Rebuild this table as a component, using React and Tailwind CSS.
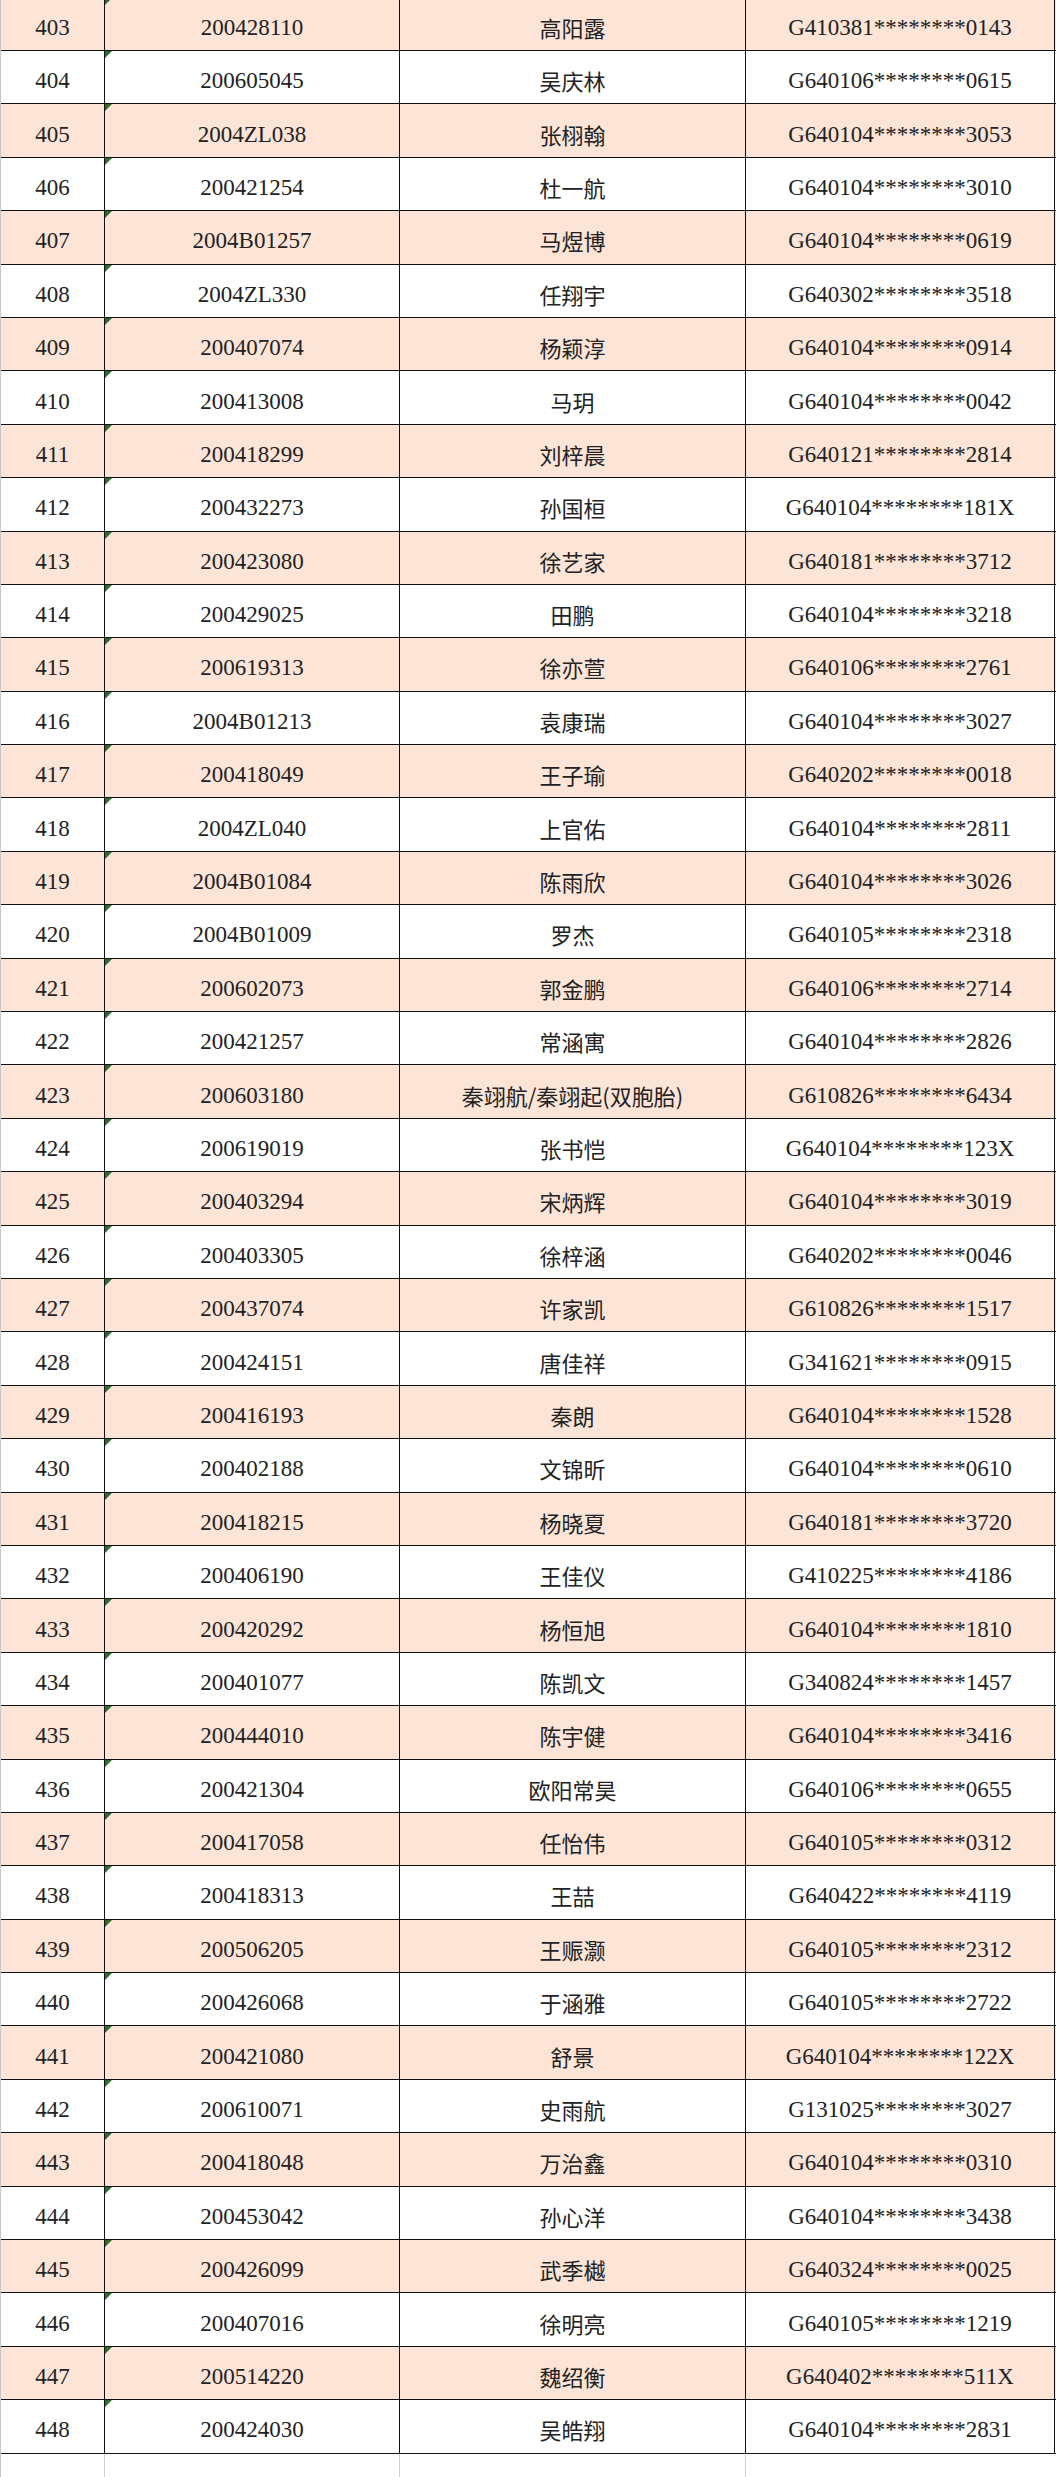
const rows = [
  ["403", "200428110", "高阳露", "G410381********0143"],
  ["404", "200605045", "吴庆林", "G640106********0615"],
  ["405", "2004ZL038", "张栩翰", "G640104********3053"],
  ["406", "200421254", "杜一航", "G640104********3010"],
  ["407", "2004B01257", "马煜博", "G640104********0619"],
  ["408", "2004ZL330", "任翔宇", "G640302********3518"],
  ["409", "200407074", "杨颖淳", "G640104********0914"],
  ["410", "200413008", "马玥", "G640104********0042"],
  ["411", "200418299", "刘梓晨", "G640121********2814"],
  ["412", "200432273", "孙国桓", "G640104********181X"],
  ["413", "200423080", "徐艺家", "G640181********3712"],
  ["414", "200429025", "田鹏", "G640104********3218"],
  ["415", "200619313", "徐亦萱", "G640106********2761"],
  ["416", "2004B01213", "袁康瑞", "G640104********3027"],
  ["417", "200418049", "王子瑜", "G640202********0018"],
  ["418", "2004ZL040", "上官佑", "G640104********2811"],
  ["419", "2004B01084", "陈雨欣", "G640104********3026"],
  ["420", "2004B01009", "罗杰", "G640105********2318"],
  ["421", "200602073", "郭金鹏", "G640106********2714"],
  ["422", "200421257", "常涵寓", "G640104********2826"],
  ["423", "200603180", "秦翊航/秦翊起(双胞胎)", "G610826********6434"],
  ["424", "200619019", "张书恺", "G640104********123X"],
  ["425", "200403294", "宋炳辉", "G640104********3019"],
  ["426", "200403305", "徐梓涵", "G640202********0046"],
  ["427", "200437074", "许家凯", "G610826********1517"],
  ["428", "200424151", "唐佳祥", "G341621********0915"],
  ["429", "200416193", "秦朗", "G640104********1528"],
  ["430", "200402188", "文锦昕", "G640104********0610"],
  ["431", "200418215", "杨晓夏", "G640181********3720"],
  ["432", "200406190", "王佳仪", "G410225********4186"],
  ["433", "200420292", "杨恒旭", "G640104********1810"],
  ["434", "200401077", "陈凯文", "G340824********1457"],
  ["435", "200444010", "陈宇健", "G640104********3416"],
  ["436", "200421304", "欧阳常昊", "G640106********0655"],
  ["437", "200417058", "任怡伟", "G640105********0312"],
  ["438", "200418313", "王喆", "G640422********4119"],
  ["439", "200506205", "王赈灏", "G640105********2312"],
  ["440", "200426068", "于涵雅", "G640105********2722"],
  ["441", "200421080", "舒景", "G640104********122X"],
  ["442", "200610071", "史雨航", "G131025********3027"],
  ["443", "200418048", "万治鑫", "G640104********0310"],
  ["444", "200453042", "孙心洋", "G640104********3438"],
  ["445", "200426099", "武季樾", "G640324********0025"],
  ["446", "200407016", "徐明亮", "G640105********1219"],
  ["447", "200514220", "魏绍衡", "G640402********511X"],
  ["448", "200424030", "吴皓翔", "G640104********2831"],
];

const latin = "font-['Liberation_Serif','Noto_Sans_CJK_SC',serif] text-[23px]";
const cjk = "font-['Noto_Sans_CJK_SC',sans-serif] text-[22px]";

function Row({ cells, shaded }) {
  const [no, id, name, card] = cells;
  return (
    <div
      className={`flex h-[53.4px] border-b border-[#111] text-[#222] leading-none ${
        shaded ? "bg-[#fce4d6]" : "bg-white"
      }`}
    >
      <div className={`w-[104px] shrink-0 flex items-center justify-center pt-[7px] border-r border-[#111] ${latin}`}>
        {no}
      </div>
      <div className={`relative w-[295px] shrink-0 flex items-center justify-center pt-[7px] border-r border-[#111] ${latin}`}>
        {/* excel "number stored as text" marker */}
        <span className="absolute left-0 top-0 w-0 h-0 border-t-[7px] border-t-[#2e6b2e] border-r-[7px] border-r-transparent" />
        {id}
      </div>
      <div className={`w-[346px] shrink-0 flex items-center justify-center pt-[6px] border-r border-[#111] ${cjk}`}>
        {name}
      </div>
      <div className={`w-[309px] shrink-0 flex items-center justify-center pt-[7px] border-r border-[#111] ${latin}`}>
        {card}
      </div>
    </div>
  );
}

export default function App() {
  return (
    <div className="w-[1056px] h-[2477px] overflow-hidden bg-white">
      <div className="mt-[-2.4px] border-l border-[#c8c8c8]">
        {rows.map((r, i) => (
          <Row key={r[0]} cells={r} shaded={i % 2 === 0} />
        ))}
        {/* empty spreadsheet row below the table */}
        <div className="flex h-[40px]">
          <div className="w-[104px] shrink-0 border-r border-[#cfcfcf]" />
          <div className="w-[295px] shrink-0 border-r border-[#cfcfcf]" />
          <div className="w-[346px] shrink-0 border-r border-[#cfcfcf]" />
          <div className="w-[309px] shrink-0" />
        </div>
      </div>
    </div>
  );
}
